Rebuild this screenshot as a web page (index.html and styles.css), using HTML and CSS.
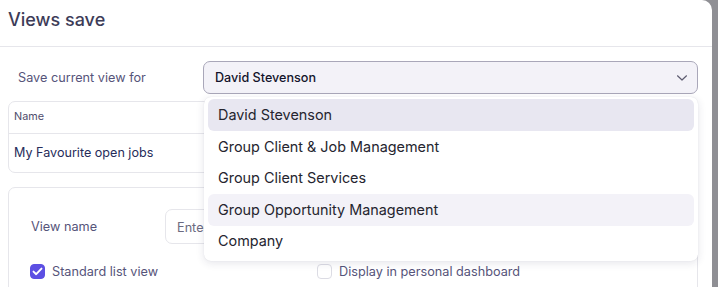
FILE: index.html
```html
<!DOCTYPE html>
<html lang="en">
<head>
    <meta charset="UTF-8">
    <title>Views save</title>
    <link rel="stylesheet" href="styles.css">
</head>
<body>
<div class="modal">
    <div class="modal-header">
        <h1>Views save</h1>
    </div>

    <div class="save-for">
        <span class="label">Save current view for</span>
        <div class="select-wrap">
            <div class="select">
                <span>David Stevenson</span>
                <svg class="chevron" width="12" height="8" viewBox="0 0 12 8">
                    <path d="M1.5 1.8 L6 6 L10.5 1.8" fill="none" stroke="#5d5c70" stroke-width="1.2" stroke-linecap="round" stroke-linejoin="round"/>
                </svg>
            </div>
            <ul class="dropdown">
                <li class="selected">David Stevenson</li>
                <li>Group Client &amp; Job Management</li>
                <li>Group Client Services</li>
                <li class="hover">Group Opportunity Management</li>
                <li>Company</li>
            </ul>
        </div>
    </div>

    <div class="card views">
        <div class="views-head">Name</div>
        <div class="views-row">My Favourite open jobs</div>
    </div>

    <div class="card form">
        <div class="field">
            <span class="label">View name</span>
            <div class="input">Enter view name</div>
        </div>
        <div class="checks">
            <label class="check"><span class="box checked">
                <svg width="11" height="9" viewBox="0 0 11 9"><path d="M1.5 4.6 L4.2 7.2 L9.5 1.6" fill="none" stroke="#fff" stroke-width="1.9" stroke-linecap="round" stroke-linejoin="round"/></svg>
            </span>Standard list view</label>
            <label class="check"><span class="box"></span>Display in personal dashboard</label>
        </div>
    </div>
</div>
</body>
</html>
```

FILE: styles.css
```css
* {
    box-sizing: border-box;
}
html, body {
    height: 100%;
}
body {
    margin: 0;
    background: #8f8f94;
    font: normal 12.7px/1.2 Inter, "Noto Sans", sans-serif;
    color: #56547a;
    overflow: hidden;
}
.modal {
    width: 712px;
    height: 100%;
    overflow: hidden;
    background: #fff;
    border-top-right-radius: 10px;
}
.modal-header {
    height: 47px;
    padding: 9px 8px 0;
    border-bottom: 1px solid #e6e6eb;
}
h1 {
    margin: 0;
    font-size: 18px;
    font-weight: 500;
    color: #3d3c58;
}
.save-for {
    display: flex;
    align-items: center;
    padding: 14px 14px 0 18px;
}
.save-for .label {
    width: 185px;
}
.select-wrap {
    position: relative;
    flex: 1;
}
.select {
    height: 33px;
    display: flex;
    align-items: center;
    justify-content: space-between;
    padding: 0 9px 0 11px;
    background: #f3f2f8;
    border: 1px solid #a9a7b9;
    border-radius: 7px;
    font-size: 12.6px;
    font-weight: 500;
    color: #14142b;
}
.dropdown {
    position: absolute;
    top: 36px;
    left: 1px;
    right: 0;
    margin: 0;
    padding: 2px 4px 4px;
    list-style: none;
    background: #fff;
    border-radius: 7px;
    box-shadow: 0 2px 8px rgba(40, 40, 80, .12), 0 0 1px rgba(40, 40, 80, .15);
    z-index: 2;
}
.dropdown li {
    height: 32px;
    line-height: 32px;
    padding-left: 10px;
    margin-bottom: -0.4px;
    border-radius: 6px;
    font-size: 14.4px;
    color: #25252f;
}
.dropdown li.selected {
    background: #e8e7f1;
}
.dropdown li.hover {
    background: #f3f2f8;
}
.card {
    margin: 0 14px 0 8px;
    border: 1px solid #e6e6eb;
    border-radius: 7px;
}
.views {
    margin-top: 7px;
}
.views-head {
    height: 32px;
    padding: 9px 5px 0;
    font-size: 10.8px;
    color: #4e4c6c;
    border-bottom: 1px solid #e6e6eb;
}
.views-row {
    height: 38px;
    padding: 11px 5px 0;
    font-size: 12.6px;
    color: #262c5a;
}
.form {
    margin-top: 14px;
    height: 130px;
    padding: 21px 22px 0;
}
.field {
    display: flex;
    align-items: center;
}
.field .label {
    width: 134px;
}
.input {
    width: 320px;
    height: 35px;
    padding: 10px 11px 0;
    border: 1px solid #e6e6eb;
    border-radius: 7px;
    color: #6b6a80;
}
.checks {
    display: grid;
    grid-template-columns: 287px 1fr;
    margin-top: 20px;
    margin-left: -1px;
}
.check {
    display: flex;
    align-items: center;
    gap: 7px;
}
.box {
    width: 15px;
    height: 15px;
    border: 1px solid #dcdce4;
    border-radius: 4px;
    display: flex;
    align-items: center;
    justify-content: center;
}
.box.checked {
    background: #5c4fe3;
    border-color: #5c4fe3;
}
```
